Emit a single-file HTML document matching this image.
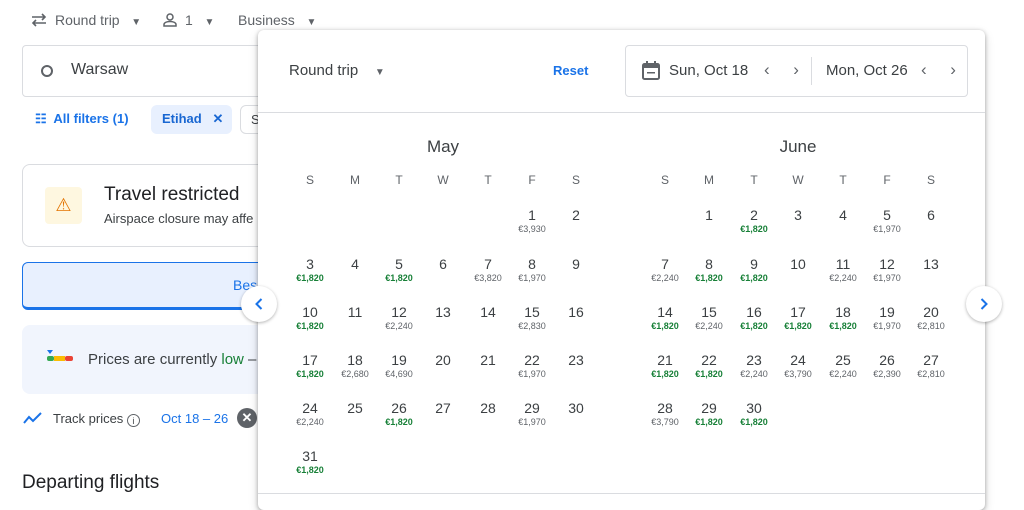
<!DOCTYPE html>
<html><head><meta charset="utf-8"><style>
*{box-sizing:border-box;margin:0;padding:0}
body{width:1024px;height:497px;overflow:hidden;background:#fff;font-family:"Liberation Sans",Arial,sans-serif;color:#3c4043;position:relative}
.a{position:absolute}
.c{position:absolute;width:44px;text-align:center;font-size:14px;color:#3c4043;line-height:18px}
.c i{display:block;font-style:normal;font-size:9px;line-height:11px;color:#5f6368}
.c i.g{color:#188038;font-weight:bold}
.h{position:absolute;width:44px;text-align:center;font-size:12px;color:#5f6368;top:173px}
.dd{font-size:10px;color:#5f6368}
</style></head><body>
<!-- top bar -->
<svg class="a" style="left:31px;top:13px" width="16" height="14" viewBox="0 0 16 14"><path d="M1 4h13M11 1l3 3-3 3M15 10H2M5 7l-3 3 3 3" fill="none" stroke="#5f6368" stroke-width="1.6"/></svg>
<div class="a" style="left:55px;top:12px;font-size:14px;color:#5f6368">Round trip&nbsp;&nbsp;&nbsp;<span class="dd">▼</span></div>
<svg class="a" style="left:162px;top:12px" width="16" height="16" viewBox="0 0 16 16"><circle cx="8" cy="5" r="3" fill="none" stroke="#5f6368" stroke-width="1.5"/><path d="M2 14v-1.5c0-2 3-3 6-3s6 1 6 3V14z" fill="none" stroke="#5f6368" stroke-width="1.5"/></svg>
<div class="a" style="left:185px;top:12px;font-size:14px;color:#5f6368">1&nbsp;&nbsp;&nbsp;<span class="dd">▼</span></div>
<div class="a" style="left:238px;top:12px;font-size:14px;color:#5f6368">Business&nbsp;&nbsp;&nbsp;<span class="dd">▼</span></div>
<!-- left panel -->
<div class="a" style="left:22px;top:45px;width:260px;height:52px;border:1px solid #dadce0;border-radius:4px"></div>
<div class="a" style="left:41px;top:65px;width:12px;height:12px;border:2.5px solid #5f6368;border-radius:50%"></div>
<div class="a" style="left:71px;top:61px;font-size:16px;color:#3c4043">Warsaw</div>
<div class="a" style="left:35px;top:111px;font-size:13px;color:#1a73e8;font-weight:bold">☷&nbsp; All filters (1)</div>
<div class="a" style="left:151px;top:105px;width:81px;height:29px;background:#e8f0fe;border-radius:6px;color:#1967d2;font-size:13px;font-weight:bold;padding:6px 0 0 11px">Etihad&nbsp;&nbsp; ✕</div>
<div class="a" style="left:240px;top:105px;width:40px;height:29px;border:1px solid #dadce0;border-radius:6px;font-size:13px;padding:6px 0 0 10px">S</div>
<div class="a" style="left:22px;top:164px;width:260px;height:83px;border:1px solid #dadce0;border-radius:8px"></div>
<div class="a" style="left:45px;top:187px;width:37px;height:37px;background:#fef7e0;border-radius:4px;color:#e37400;font-size:18px;text-align:center;line-height:37px">⚠</div>
<div class="a" style="left:104px;top:184px;font-size:19px;color:#202124">Travel restricted</div>
<div class="a" style="left:104px;top:211px;font-size:13px;color:#3c4043">Airspace closure may affe</div>
<div class="a" style="left:22px;top:262px;width:260px;height:48px;background:#e8f0fe;border:1px solid #1a73e8;border-bottom:3px solid #1a73e8;border-radius:6px"></div>
<div class="a" style="left:233px;top:277px;font-size:14px;color:#1a73e8">Bes</div>
<div class="a" style="left:22px;top:325px;width:260px;height:69px;background:#f1f5fd;border-radius:8px"></div>
<div class="a" style="left:47px;top:350px;width:4px;height:4px;border-left:3px solid transparent;border-right:3px solid transparent;border-top:4px solid #1a73e8"></div>
<div class="a" style="left:47px;top:356px;width:7px;height:5px;background:#34a853;border-radius:2px"></div>
<div class="a" style="left:54px;top:356px;width:11px;height:5px;background:#fbbc04"></div>
<div class="a" style="left:65px;top:356px;width:8px;height:5px;background:#ea4335;border-radius:2px"></div>
<div class="a" style="left:88px;top:351px;font-size:15px;color:#3c4043">Prices are currently <span style="color:#188038">low</span> –</div>
<svg class="a" style="left:23px;top:411px" width="20" height="14" viewBox="0 0 20 14"><path d="M1 12l5-6 4 4 8-8" fill="none" stroke="#1a73e8" stroke-width="2"/></svg>
<div class="a" style="left:53px;top:411px;font-size:13px;color:#3c4043">Track prices <span style="display:inline-block;width:13px;height:13px;border:1px solid #5f6368;border-radius:50%;font-size:9px;text-align:center;line-height:12px;vertical-align:-1px">i</span></div>
<div class="a" style="left:161px;top:411px;font-size:13px;color:#1a73e8">Oct 18 – 26</div>
<div class="a" style="left:237px;top:408px;width:20px;height:20px;background:#5f6368;border-radius:50%;color:#fff;font-size:13px;text-align:center;line-height:20px;font-weight:bold">✕</div>
<div class="a" style="left:22px;top:472px;font-size:19px;color:#202124">Departing flights</div>
<!-- dialog -->
<div class="a" style="left:258px;top:30px;width:727px;height:480px;background:#fff;border-radius:6px;box-shadow:0 1px 4px rgba(0,0,0,.3),0 4px 10px rgba(0,0,0,.15)"></div>
<div class="a" style="left:258px;top:112px;width:727px;height:1px;background:#dadce0"></div>
<div class="a" style="left:258px;top:493px;width:727px;height:1px;background:#dadce0"></div>
<div class="a" style="left:289px;top:62px;font-size:15px;color:#3c4043">Round trip&nbsp;&nbsp;&nbsp;&nbsp;<span style="font-size:10px;color:#5f6368">▼</span></div>
<div class="a" style="left:553px;top:63px;font-size:13px;color:#1a73e8;font-weight:bold">Reset</div>
<div class="a" style="left:625px;top:45px;width:343px;height:52px;border:1px solid #dadce0;border-radius:4px"></div>
<svg class="a" style="left:642px;top:61px" width="18" height="19" viewBox="0 0 18 19"><rect x="1" y="3" width="16" height="15" rx="1.5" fill="none" stroke="#5f6368" stroke-width="2"/><rect x="1" y="3" width="16" height="4" fill="#5f6368"/><rect x="4" y="0" width="2" height="4" fill="#5f6368"/><rect x="12" y="0" width="2" height="4" fill="#5f6368"/><rect x="5" y="11" width="8" height="1.5" fill="#5f6368"/></svg>
<div class="a" style="left:669px;top:62px;font-size:15px;color:#3c4043">Sun, Oct 18</div>
<div class="a" style="left:764px;top:60px;font-size:17px;color:#5f6368">‹&nbsp;&nbsp;&nbsp;&nbsp;&nbsp;›</div>
<div class="a" style="left:811px;top:57px;width:1px;height:28px;background:#dadce0"></div>
<div class="a" style="left:826px;top:62px;font-size:15px;color:#3c4043">Mon, Oct 26</div>
<div class="a" style="left:921px;top:60px;font-size:17px;color:#5f6368">‹&nbsp;&nbsp;&nbsp;&nbsp;&nbsp;›</div>
<div class="a" style="left:400px;top:137px;width:86px;text-align:center;font-size:17px;color:#3c4043">May</div>
<div class="a" style="left:755px;top:137px;width:86px;text-align:center;font-size:17px;color:#3c4043">June</div>
<div class="h" style="left:288px">S</div><div class="h" style="left:333px">M</div><div class="h" style="left:377px">T</div><div class="h" style="left:421px">W</div><div class="h" style="left:466px">T</div><div class="h" style="left:510px">F</div><div class="h" style="left:554px">S</div>
<div class="h" style="left:643px">S</div><div class="h" style="left:687px">M</div><div class="h" style="left:732px">T</div><div class="h" style="left:776px">W</div><div class="h" style="left:821px">T</div><div class="h" style="left:865px">F</div><div class="h" style="left:909px">S</div>
<!-- May -->
<div class="c" style="left:510px;top:206px">1<i>€3,930</i></div><div class="c" style="left:554px;top:206px">2</div>
<div class="c" style="left:288px;top:255px">3<i class="g">€1,820</i></div><div class="c" style="left:333px;top:255px">4</div><div class="c" style="left:377px;top:255px">5<i class="g">€1,820</i></div><div class="c" style="left:421px;top:255px">6</div><div class="c" style="left:466px;top:255px">7<i>€3,820</i></div><div class="c" style="left:510px;top:255px">8<i>€1,970</i></div><div class="c" style="left:554px;top:255px">9</div>
<div class="c" style="left:288px;top:303px">10<i class="g">€1,820</i></div><div class="c" style="left:333px;top:303px">11</div><div class="c" style="left:377px;top:303px">12<i>€2,240</i></div><div class="c" style="left:421px;top:303px">13</div><div class="c" style="left:466px;top:303px">14</div><div class="c" style="left:510px;top:303px">15<i>€2,830</i></div><div class="c" style="left:554px;top:303px">16</div>
<div class="c" style="left:288px;top:351px">17<i class="g">€1,820</i></div><div class="c" style="left:333px;top:351px">18<i>€2,680</i></div><div class="c" style="left:377px;top:351px">19<i>€4,690</i></div><div class="c" style="left:421px;top:351px">20</div><div class="c" style="left:466px;top:351px">21</div><div class="c" style="left:510px;top:351px">22<i>€1,970</i></div><div class="c" style="left:554px;top:351px">23</div>
<div class="c" style="left:288px;top:399px">24<i>€2,240</i></div><div class="c" style="left:333px;top:399px">25</div><div class="c" style="left:377px;top:399px">26<i class="g">€1,820</i></div><div class="c" style="left:421px;top:399px">27</div><div class="c" style="left:466px;top:399px">28</div><div class="c" style="left:510px;top:399px">29<i>€1,970</i></div><div class="c" style="left:554px;top:399px">30</div>
<div class="c" style="left:288px;top:447px">31<i class="g">€1,820</i></div>
<!-- June -->
<div class="c" style="left:687px;top:206px">1</div><div class="c" style="left:732px;top:206px">2<i class="g">€1,820</i></div><div class="c" style="left:776px;top:206px">3</div><div class="c" style="left:821px;top:206px">4</div><div class="c" style="left:865px;top:206px">5<i>€1,970</i></div><div class="c" style="left:909px;top:206px">6</div>
<div class="c" style="left:643px;top:255px">7<i>€2,240</i></div><div class="c" style="left:687px;top:255px">8<i class="g">€1,820</i></div><div class="c" style="left:732px;top:255px">9<i class="g">€1,820</i></div><div class="c" style="left:776px;top:255px">10</div><div class="c" style="left:821px;top:255px">11<i>€2,240</i></div><div class="c" style="left:865px;top:255px">12<i>€1,970</i></div><div class="c" style="left:909px;top:255px">13</div>
<div class="c" style="left:643px;top:303px">14<i class="g">€1,820</i></div><div class="c" style="left:687px;top:303px">15<i>€2,240</i></div><div class="c" style="left:732px;top:303px">16<i class="g">€1,820</i></div><div class="c" style="left:776px;top:303px">17<i class="g">€1,820</i></div><div class="c" style="left:821px;top:303px">18<i class="g">€1,820</i></div><div class="c" style="left:865px;top:303px">19<i>€1,970</i></div><div class="c" style="left:909px;top:303px">20<i>€2,810</i></div>
<div class="c" style="left:643px;top:351px">21<i class="g">€1,820</i></div><div class="c" style="left:687px;top:351px">22<i class="g">€1,820</i></div><div class="c" style="left:732px;top:351px">23<i>€2,240</i></div><div class="c" style="left:776px;top:351px">24<i>€3,790</i></div><div class="c" style="left:821px;top:351px">25<i>€2,240</i></div><div class="c" style="left:865px;top:351px">26<i>€2,390</i></div><div class="c" style="left:909px;top:351px">27<i>€2,810</i></div>
<div class="c" style="left:643px;top:399px">28<i>€3,790</i></div><div class="c" style="left:687px;top:399px">29<i class="g">€1,820</i></div><div class="c" style="left:732px;top:399px">30<i class="g">€1,820</i></div>
<!-- nav circles -->
<div class="a" style="left:241px;top:286px;width:36px;height:36px;border-radius:50%;background:#fff;box-shadow:0 1px 3px rgba(0,0,0,.3)"></div>
<svg class="a" style="left:251px;top:296px" width="16" height="16" viewBox="0 0 16 16"><path d="M10.5 3L5.5 8l5 5" fill="none" stroke="#1a73e8" stroke-width="2"/></svg>
<div class="a" style="left:966px;top:286px;width:36px;height:36px;border-radius:50%;background:#fff;box-shadow:0 1px 3px rgba(0,0,0,.3)"></div>
<svg class="a" style="left:976px;top:296px" width="16" height="16" viewBox="0 0 16 16"><path d="M5.5 3l5 5-5 5" fill="none" stroke="#1a73e8" stroke-width="2"/></svg>
</body></html>
